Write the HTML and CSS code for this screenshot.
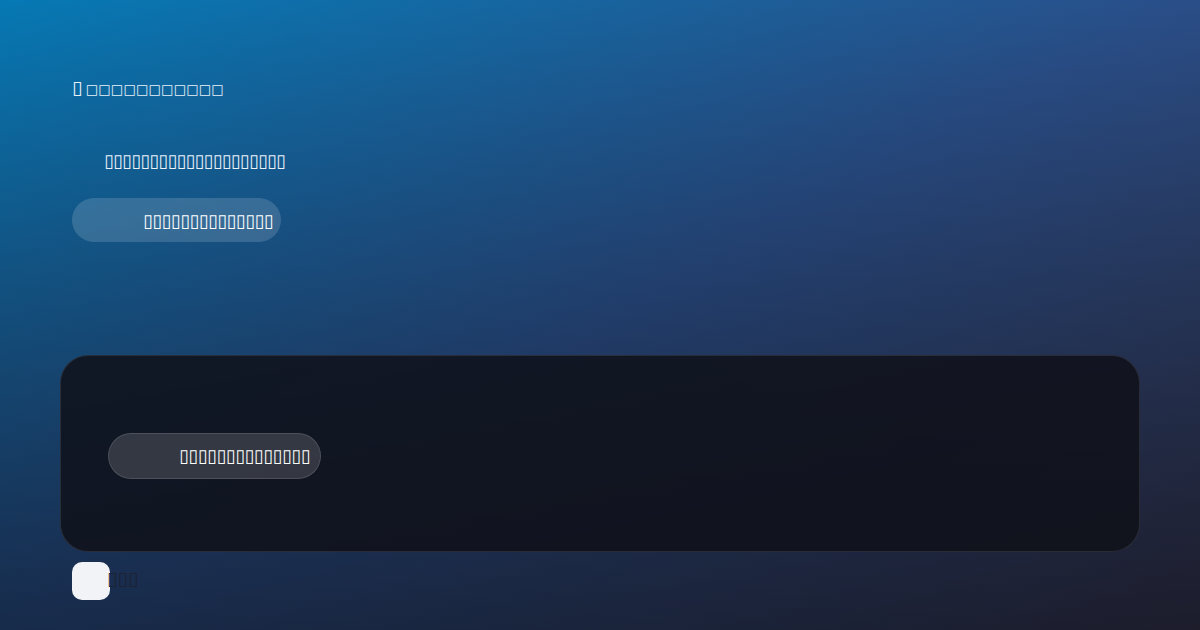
FILE: index.html
```html
<!DOCTYPE html>
<html lang="en">
<head>
    <meta charset="UTF-8">
    <meta name="viewport" content="width=device-width, initial-scale=1.0">
    <title>Home</title>
    <link rel="stylesheet" href="styles.css">
</head>
<body>
    <div class="page">
        <header class="hero">
            <h1 class="title"><span class="title-mark">▯</span> □□□□□□□□□□□</h1>
            <p class="lead">▯▯▯▯▯▯▯▯▯▯▯▯▯▯▯▯▯▯▯▯</p>
            <a class="pill" href="#start">▯▯▯▯▯▯▯▯▯▯▯▯▯▯</a>
        </header>

        <section class="panel" id="start">
            <a class="pill pill-dark" href="#more">▯▯▯▯▯▯▯▯▯▯▯▯▯▯</a>
        </section>

        <footer class="foot">
            <span class="badge"></span>
            <span class="foot-text">▯▯▯</span>
        </footer>
    </div>
</body>
</html>
```

FILE: styles.css
```css
html, body {
    margin: 0;
    padding: 0;
    height: 100%;
}
body {
    font-family: 'DejaVu Sans', sans-serif;
    color: #eaf2fa;
    background:
        linear-gradient(to bottom, rgba(0, 0, 0, 0), rgba(0, 0, 0, 0.45)),
        linear-gradient(to bottom right, #0679b4 0%, #2a4e88 50%, #34344f 100%);
    overflow: hidden;
}
.page {
    padding: 0 60px;
    display: flex;
    flex-direction: column;
}
.hero {
    padding: 73px 12px 0;
    height: 355px;
    box-sizing: border-box;
}
.title {
    margin: 0;
    font-size: 13.3px;
    font-weight: normal;
    line-height: 28px;
}
.title-mark {
    font-size: 19px;
    margin-right: -1px;
}
.lead {
    margin: 46px 0 0 32px;
    font-size: 18px;
    letter-spacing: -0.85px;
    line-height: 22px;
}
.pill {
    display: inline-flex;
    align-items: center;
    justify-content: flex-end;
    margin-top: 26px;
    height: 44px;
    width: 209px;
    box-sizing: border-box;
    padding: 0 8px;
    border-radius: 22px;
    background: rgba(255, 255, 255, 0.15);
    color: #ffffff;
    text-decoration: none;
    font-size: 18px;
    letter-spacing: -0.62px;
}
.panel {
    height: 197px;
    box-sizing: border-box;
    border: 1px solid rgba(255, 255, 255, 0.1);
    border-radius: 28px;
    background: rgba(15, 17, 25, 0.85);
    padding: 0 47px;
    display: flex;
    align-items: center;
}
.pill-dark {
    margin-top: 4px;
    width: 213px;
    height: 46px;
    border-radius: 23px;
    padding: 0 10px;
    background: rgba(255, 255, 255, 0.15);
    border: 1px solid rgba(255, 255, 255, 0.12);
    letter-spacing: -0.55px;
}
.foot {
    margin-top: 10px;
    padding: 0 12px;
    display: flex;
    align-items: center;
}
.badge {
    width: 38px;
    height: 38px;
    border-radius: 10px;
    background: #f1f3f6;
}
.foot-text {
    margin-left: -3px;
    padding-bottom: 6px;
    font-size: 19px;
    color: #1b2233;
}
```
